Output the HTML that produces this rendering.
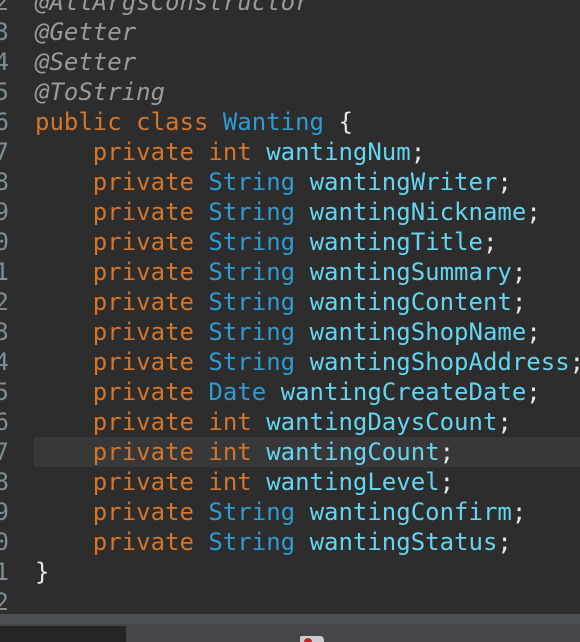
<!DOCTYPE html>
<html><head><style>
html,body{margin:0;padding:0;width:580px;height:642px;overflow:hidden;background:#2d2d2d;}
.code{position:absolute;left:0;top:-43px;width:580px;font-family:"DejaVu Sans Mono","Liberation Mono",monospace;font-size:24px;line-height:30px;}
.l{height:30px;position:relative;}
.n{position:absolute;right:571px;color:#7f8e96;white-space:pre;}
.t{position:absolute;left:35px;color:#e6e6e6;white-space:pre;}
.hl{position:absolute;left:34px;top:437px;width:546px;height:30px;background:#383838;}
.a{color:#9a9a9a;font-style:italic}
.k{color:#d5752b}
.ty{color:#2f9bd3}
.f{color:#66d4ef}
.bar1{position:absolute;left:0;top:614px;width:580px;height:10px;background:#4b5153;}
.bar2{position:absolute;left:0;top:624px;width:580px;height:18px;background:#454649;}
.bar3{position:absolute;left:0;top:626px;width:126px;height:16px;background:#262626;}
.ic{position:absolute;left:300px;top:636px;width:24px;height:6px;background:#ccc;border-radius:2px 4px 0 0;}
.ic2{position:absolute;left:304px;top:638px;width:8px;height:4px;background:#c0202a;border-radius:4px 4px 0 0;}
</style></head><body>
<div class="hl"></div>
<div class="code"><div class="l"><span class="n">11</span><span class="t a">@NoArgsConstructor</span></div><div class="l"><span class="n">12</span><span class="t a">@AllArgsConstructor</span></div><div class="l"><span class="n">13</span><span class="t a">@Getter</span></div><div class="l"><span class="n">14</span><span class="t a">@Setter</span></div><div class="l"><span class="n">15</span><span class="t a">@ToString</span></div><div class="l"><span class="n">16</span><span class="t"><span class="k">public class</span> <span class="ty">Wanting</span> {</span></div><div class="l"><span class="n">17</span><span class="t">    <span class="k">private int</span> <span class="f">wantingNum</span>;</span></div><div class="l"><span class="n">18</span><span class="t">    <span class="k">private</span> <span class="ty">String</span> <span class="f">wantingWriter</span>;</span></div><div class="l"><span class="n">19</span><span class="t">    <span class="k">private</span> <span class="ty">String</span> <span class="f">wantingNickname</span>;</span></div><div class="l"><span class="n">20</span><span class="t">    <span class="k">private</span> <span class="ty">String</span> <span class="f">wantingTitle</span>;</span></div><div class="l"><span class="n">21</span><span class="t">    <span class="k">private</span> <span class="ty">String</span> <span class="f">wantingSummary</span>;</span></div><div class="l"><span class="n">22</span><span class="t">    <span class="k">private</span> <span class="ty">String</span> <span class="f">wantingContent</span>;</span></div><div class="l"><span class="n">23</span><span class="t">    <span class="k">private</span> <span class="ty">String</span> <span class="f">wantingShopName</span>;</span></div><div class="l"><span class="n">24</span><span class="t">    <span class="k">private</span> <span class="ty">String</span> <span class="f">wantingShopAddress</span>;</span></div><div class="l"><span class="n">25</span><span class="t">    <span class="k">private</span> <span class="ty">Date</span> <span class="f">wantingCreateDate</span>;</span></div><div class="l"><span class="n">26</span><span class="t">    <span class="k">private int</span> <span class="f">wantingDaysCount</span>;</span></div><div class="l"><span class="n">27</span><span class="t">    <span class="k">private int</span> <span class="f">wantingCount</span>;</span></div><div class="l"><span class="n">28</span><span class="t">    <span class="k">private int</span> <span class="f">wantingLevel</span>;</span></div><div class="l"><span class="n">29</span><span class="t">    <span class="k">private</span> <span class="ty">String</span> <span class="f">wantingConfirm</span>;</span></div><div class="l"><span class="n">30</span><span class="t">    <span class="k">private</span> <span class="ty">String</span> <span class="f">wantingStatus</span>;</span></div><div class="l"><span class="n">31</span><span class="t">}</span></div><div class="l"><span class="n">32</span><span class="t"></span></div></div>
<div class="bar1"></div><div class="bar2"></div><div class="bar3"></div>
<div class="ic"></div><div class="ic2"></div>
</body></html>
